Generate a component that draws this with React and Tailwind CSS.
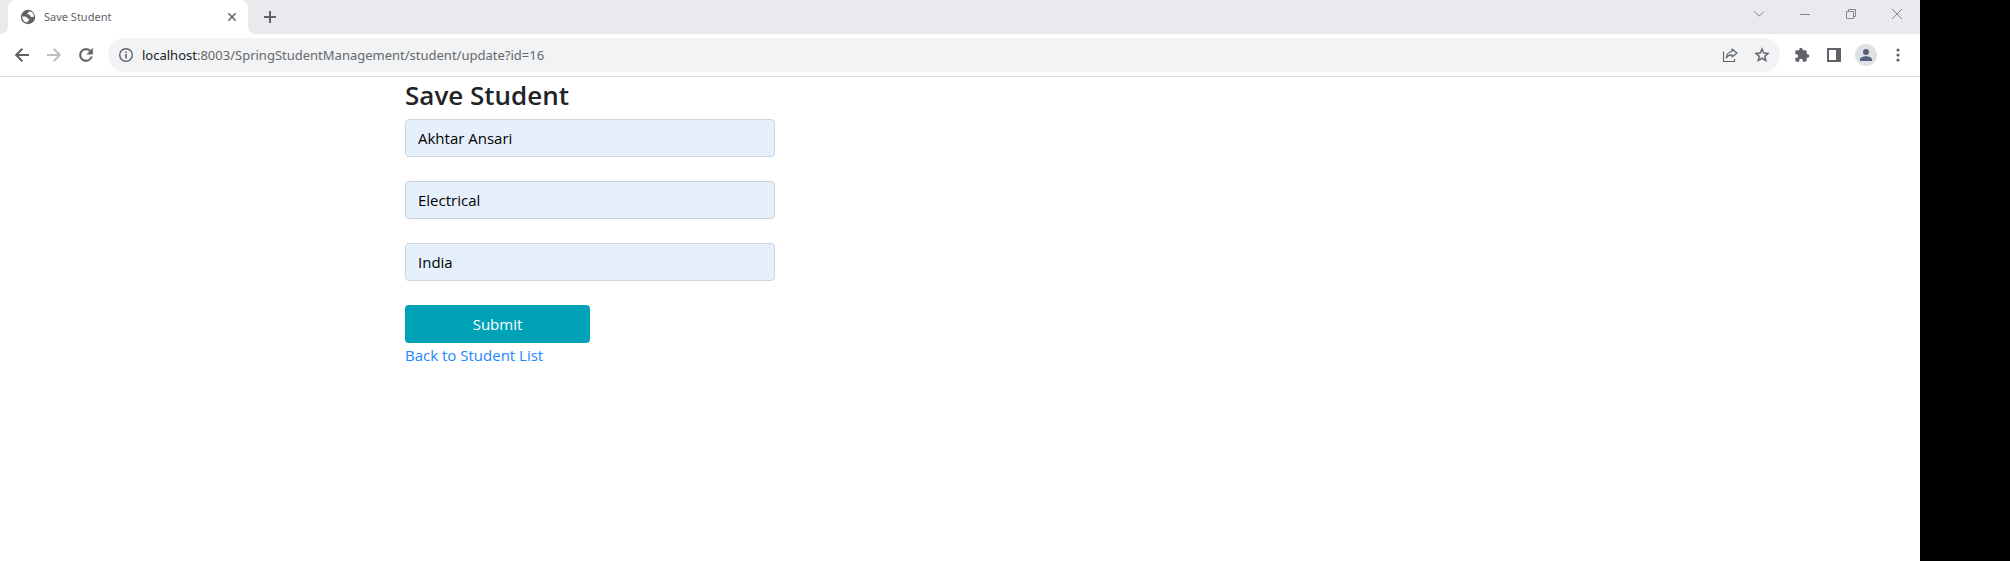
import React from "react";

const iconButton = "flex size-8 shrink-0 items-center justify-center rounded-full text-[#5f6368]";

function Icon({ children, className = "size-5", box = "0 0 24 24" }) {
  return (
    <svg viewBox={box} className={className} fill="currentColor" aria-hidden="true">
      {children}
    </svg>
  );
}

function TabStrip() {
  return (
    <div className="flex h-[34px] bg-[#e8eaed]">
      <div className="flex w-2 items-end bg-white">
        <div className="size-full rounded-br-lg bg-[#e8eaed]" />
      </div>
      <div className="flex w-60 items-center rounded-t-lg bg-white pl-3 pr-2 text-[#5f6368]">
        <Icon className="size-4" box="0 0 16 16">
          <circle cx="8" cy="8" r="7.200" />
          <path
            d="M8.300 2.200c.9.600.4 1.500-.4 1.800-.9.300-.7 1.200 0 1.600.7.400 1.600.1 2.200.6.600.600.3 1.400 1.100 1.700.9.300 1.500-.4 2.600-.2v-1.900l-1.700-2.500zM2.100 7.600c2-.1 3.300-.1 4.200.4.900.500.7 1.500 1.800 1.700.9.100 1.500.4 1.200 1.200-.3.700-1.200.5-1.600 1.200-.2.400-.1.900-.1 1.500C4.500 13.400 2.300 11 2.100 7.600z"
            fill="white"
          />
        </Icon>
        <span className="ml-2 flex-1 font-['Noto_Sans',sans-serif] text-[11px]">Save Student</span>
        <button type="button" aria-label="Close tab" className="flex size-4 items-center justify-center">
          <svg viewBox="0 0 8 8" className="size-2" stroke="currentColor" strokeWidth="1.500" aria-hidden="true">
            <path d="M.3.3l7.400 7.400M7.700.3L.3 7.700" />
          </svg>
        </button>
      </div>
      <div className="w-2 bg-white">
        <div className="size-full rounded-bl-lg bg-[#e8eaed]" />
      </div>
      <button type="button" aria-label="New tab" className="flex w-7 items-center justify-center text-[#5f6368]">
        <svg viewBox="0 0 12 12" className="size-3" stroke="currentColor" strokeWidth="2" aria-hidden="true">
          <path d="M6 0v12M0 6h12" />
        </svg>
      </button>
      <div className="ml-auto flex h-7 text-[#85878b]">
        <button type="button" aria-label="Search tabs" className="flex w-[46px] items-center justify-center">
          <svg viewBox="0 0 10 6" className="h-1.5 w-2.5" fill="none" stroke="currentColor" aria-hidden="true">
            <path d="M.3.5L5 5.200 9.700.5" />
          </svg>
        </button>
        <button type="button" aria-label="Minimize" className="flex w-[46px] items-center justify-center">
          <svg viewBox="0 0 10 10" className="size-2.5" stroke="currentColor" aria-hidden="true">
            <path d="M0 5.500h10" />
          </svg>
        </button>
        <button type="button" aria-label="Restore" className="flex w-[46px] items-center justify-center">
          <svg viewBox="0 0 10 10" className="size-2.5" fill="none" stroke="currentColor" aria-hidden="true">
            <path d="M.5 2.500h7v7h-7zM2.500 2.500v-2h7v7h-2" />
          </svg>
        </button>
        <button type="button" aria-label="Close" className="flex w-[46px] items-center justify-center">
          <svg viewBox="0 0 10 10" className="size-2.5" stroke="currentColor" aria-hidden="true">
            <path d="M0 0l10 10M10 0L0 10" />
          </svg>
        </button>
      </div>
    </div>
  );
}

function Toolbar() {
  return (
    <div className="flex h-[43px] items-center border-b border-[#dadce0] bg-white px-1.5">
      <button type="button" aria-label="Back" className={iconButton}>
        <svg viewBox="0 0 14 14" className="size-3.5" fill="none" stroke="currentColor" strokeWidth="2" aria-hidden="true">
          <path d="M14 7H1.500M7.300.8L1.200 7l6.100 6.200" />
        </svg>
      </button>
      <button type="button" aria-label="Forward" className={iconButton}>
        <svg viewBox="0 0 14 14" className="size-3.5 text-[#bdbfc1]" fill="none" stroke="currentColor" strokeWidth="2" aria-hidden="true">
          <path d="M0 7h12.500M6.700.8L12.800 7l-6.100 6.200" />
        </svg>
      </button>
      <button type="button" aria-label="Reload" className={iconButton}>
        <svg viewBox="0 0 24 24" className="size-5" fill="currentColor" stroke="currentColor" strokeWidth=".5" aria-hidden="true">
          <path d="M17.650 6.350A7.958 7.958 0 0 0 12 4a8 8 0 1 0 7.730 10h-2.080A5.990 5.990 0 0 1 12 18a6 6 0 1 1 0-12c1.660 0 3.140.69 4.220 1.780L13 11h7V4l-2.350 2.350z" />
        </svg>
      </button>
      <div className="ml-1.5 flex h-[34px] min-w-0 flex-1 items-center rounded-full bg-[#f1f3f4] pl-2.5 pr-0.5">
        <button type="button" aria-label="View site information" className="text-[#5f6368]">
          <Icon className="size-4" box="0 0 16 16">
            <circle cx="8" cy="8" r="6.300" fill="none" stroke="currentColor" strokeWidth="1.400" />
            <path d="M7.200 7h1.600v4.500H7.200zM7.200 4.500h1.600V6H7.200z" />
          </Icon>
        </button>
        <a
          href="#"
          className="ml-2 flex-1 truncate font-['Noto_Sans',sans-serif] text-[13px] leading-5 text-[#65686c]"
        >
          <span className="text-[#202124]">localhost</span>:8003/SpringStudentManagement/student/update?id=16
        </a>
        <button type="button" aria-label="Share this page" className={iconButton}>
          <svg viewBox="0 0 16 16" className="size-4" fill="none" stroke="currentColor" strokeWidth="1.100" aria-hidden="true">
            <path d="M1.500 4.500v10h11V12" />
            <path d="M10 2l5 4-5 4V7.900C7.300 7.800 5.500 8.800 4.200 11c.3-3.600 2.500-6 5.800-6.500z" strokeLinejoin="round" />
          </svg>
        </button>
        <button type="button" aria-label="Bookmark this tab" className={iconButton}>
          <Icon className="size-[18px]">
            <path
              d="M22 9.240l-7.190-.62L12 2 9.190 8.630 2 9.240l5.460 4.730L5.820 21 12 17.270 18.180 21l-1.630-7.030L22 9.240zM12 15.400l-3.760 2.270 1-4.280-3.320-2.880 4.380-.38L12 6.100l1.710 4.040 4.380.38-3.320 2.880 1 4.280L12 15.400z"
              stroke="currentColor"
              strokeWidth=".4"
            />
          </Icon>
        </button>
      </div>
      <button type="button" aria-label="Extensions" className={`${iconButton} ml-1.5`}>
        <Icon className="size-4">
          <path d="M20.500 11H19V7c0-1.100-.9-2-2-2h-4V3.500a2.500 2.500 0 0 0-5 0V5H4c-1.100 0-1.990.9-1.990 2v3.800H3.500c1.490 0 2.700 1.210 2.700 2.700s-1.210 2.700-2.700 2.700H2V20c0 1.100.9 2 2 2h3.800v-1.500c0-1.490 1.210-2.700 2.700-2.700s2.700 1.210 2.700 2.700V22H17c1.100 0 2-.9 2-2v-4h1.500a2.500 2.500 0 0 0 0-5z" />
        </Icon>
      </button>
      <button type="button" aria-label="Side panel" className={iconButton}>
        <Icon className="size-3.5" box="0 0 14 14">
          <path d="M0 0h14v14H0zM2 2v10h7V2z" fillRule="evenodd" />
        </Icon>
      </button>
      <button type="button" aria-label="Profile" className={iconButton}>
        <Icon className="size-[22px]" box="0 0 22 22">
          <circle cx="11" cy="11" r="11" fill="#dee1e6" />
          <path
            d="M11 5a3 3 0 1 1 0 6 3 3 0 0 1 0-6zM5 17v-1.800c0-2 4-3 6-3s6 1 6 3V17z"
            fill="#55637a"
          />
        </Icon>
      </button>
      <button type="button" aria-label="Menu" className={iconButton}>
        <Icon className="size-4" box="0 0 16 16">
          <circle cx="8" cy="3" r="1.600" />
          <circle cx="8" cy="8" r="1.600" />
          <circle cx="8" cy="13" r="1.600" />
        </Icon>
      </button>
    </div>
  );
}

const fields = [
  { name: "name", label: "Student name", value: "Akhtar Ansari" },
  { name: "department", label: "Department", value: "Electrical" },
  { name: "country", label: "Country", value: "India" },
];

function StudentForm() {
  return (
    <main className="mx-auto w-full max-w-[1140px] px-[15px] font-['Open_Sans',sans-serif] text-[15px] leading-6">
      <h1 className="mb-1.5 text-[26px] font-semibold leading-9 text-[#212529]">Save Student</h1>
      <form onSubmit={(event) => event.preventDefault()}>
        {fields.map((field) => (
          <input
            key={field.name}
            name={field.name}
            aria-label={field.label}
            defaultValue={field.value}
            className="mb-6 block h-[38px] w-1/3 rounded border border-[#ced4da] bg-[#e6f0fd] px-3 text-black"
          />
        ))}
        <button type="submit" className="block h-[38px] w-1/6 rounded bg-[#00a2b8] text-white">
          Submit
        </button>
      </form>
      <a href="#" className="text-[#1a86ff]">
        Back to Student List
      </a>
    </main>
  );
}

export default function App() {
  return (
    <div className="flex min-h-screen bg-black">
      <div className="min-w-0 flex-1 bg-white">
        <TabStrip />
        <Toolbar />
        <StudentForm />
      </div>
      <div className="w-[90px] shrink-0" />
    </div>
  );
}
